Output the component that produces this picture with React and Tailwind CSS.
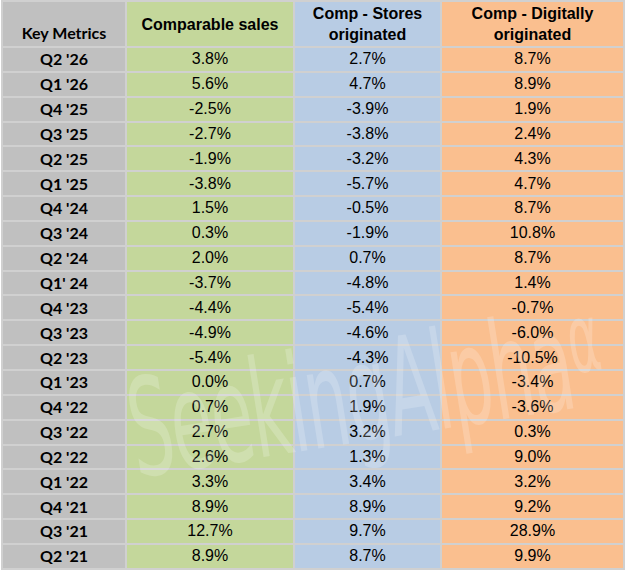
import React from "react";

const rows = [
  ["Q2 '26", "3.8%", "2.7%", "8.7%"],
  ["Q1 '26", "5.6%", "4.7%", "8.9%"],
  ["Q4 '25", "-2.5%", "-3.9%", "1.9%"],
  ["Q3 '25", "-2.7%", "-3.8%", "2.4%"],
  ["Q2 '25", "-1.9%", "-3.2%", "4.3%"],
  ["Q1 '25", "-3.8%", "-5.7%", "4.7%"],
  ["Q4 '24", "1.5%", "-0.5%", "8.7%"],
  ["Q3 '24", "0.3%", "-1.9%", "10.8%"],
  ["Q2 '24", "2.0%", "0.7%", "8.7%"],
  ["Q1' 24", "-3.7%", "-4.8%", "1.4%"],
  ["Q4 '23", "-4.4%", "-5.4%", "-0.7%"],
  ["Q3 '23", "-4.9%", "-4.6%", "-6.0%"],
  ["Q2 '23", "-5.4%", "-4.3%", "-10.5%"],
  ["Q1 '23", "0.0%", "0.7%", "-3.4%"],
  ["Q4 '22", "0.7%", "1.9%", "-3.6%"],
  ["Q3 '22", "2.7%", "3.2%", "0.3%"],
  ["Q2 '22", "2.6%", "1.3%", "9.0%"],
  ["Q1 '22", "3.3%", "3.4%", "3.2%"],
  ["Q4 '21", "8.9%", "8.9%", "9.2%"],
  ["Q3 '21", "12.7%", "9.7%", "28.9%"],
  ["Q2 '21", "8.9%", "8.7%", "9.9%"],
];

const label = "font-['Lato','Open_Sans',sans-serif] font-bold text-[16px]";
const num = "font-['Liberation_Sans',Arial,sans-serif] text-[16px]";
const head = "font-['Liberation_Sans',Arial,sans-serif] font-bold text-[16px] leading-[21px]";

export default function App() {
  return (
    <div className="relative w-[628px] h-[575px] bg-white overflow-hidden text-black">
      <div className="ml-[1px] w-[624px] grid grid-cols-[122px_166px_145px_181px] grid-rows-[44px_repeat(21,22.85px)] gap-[2px] p-[2px] bg-[#d0d0d0]">
        <div className={`bg-[#c0c0c0] flex items-end justify-center pb-[1px] ${label}`}>Key Metrics</div>
        <div className={`bg-[#c4d79b] flex items-center justify-center ${head}`}>Comparable sales</div>
        <div className={`bg-[#b8cce4] flex items-center justify-center text-center ${head}`}>Comp - Stores<br />originated</div>
        <div className={`bg-[#fabf8f] flex items-center justify-center text-center ${head}`}>Comp - Digitally<br />originated</div>
        {rows.map(r => (
          <React.Fragment key={r[0]}>
            <div className={`bg-[#c0c0c0] flex items-center justify-center ${label}`}>{r[0]}</div>
            <div className={`bg-[#c4d79b] flex items-center justify-center ${num}`}>{r[1]}</div>
            <div className={`bg-[#b8cce4] flex items-center justify-center ${num}`}>{r[2]}</div>
            <div className={`bg-[#fabf8f] flex items-center justify-center ${num}`}>{r[3]}</div>
          </React.Fragment>
        ))}
      </div>
      {/* watermark */}
      <div className="pointer-events-none absolute left-[140px] top-[362px] origin-bottom-left -rotate-[9deg] text-white/20 font-['DejaVu_Sans',sans-serif] text-[136px] leading-none tracking-[-3px] scale-x-[0.5] whitespace-nowrap">
        SeekingAlpha<span className="text-[96px] align-top">α</span>
      </div>
    </div>
  );
}
